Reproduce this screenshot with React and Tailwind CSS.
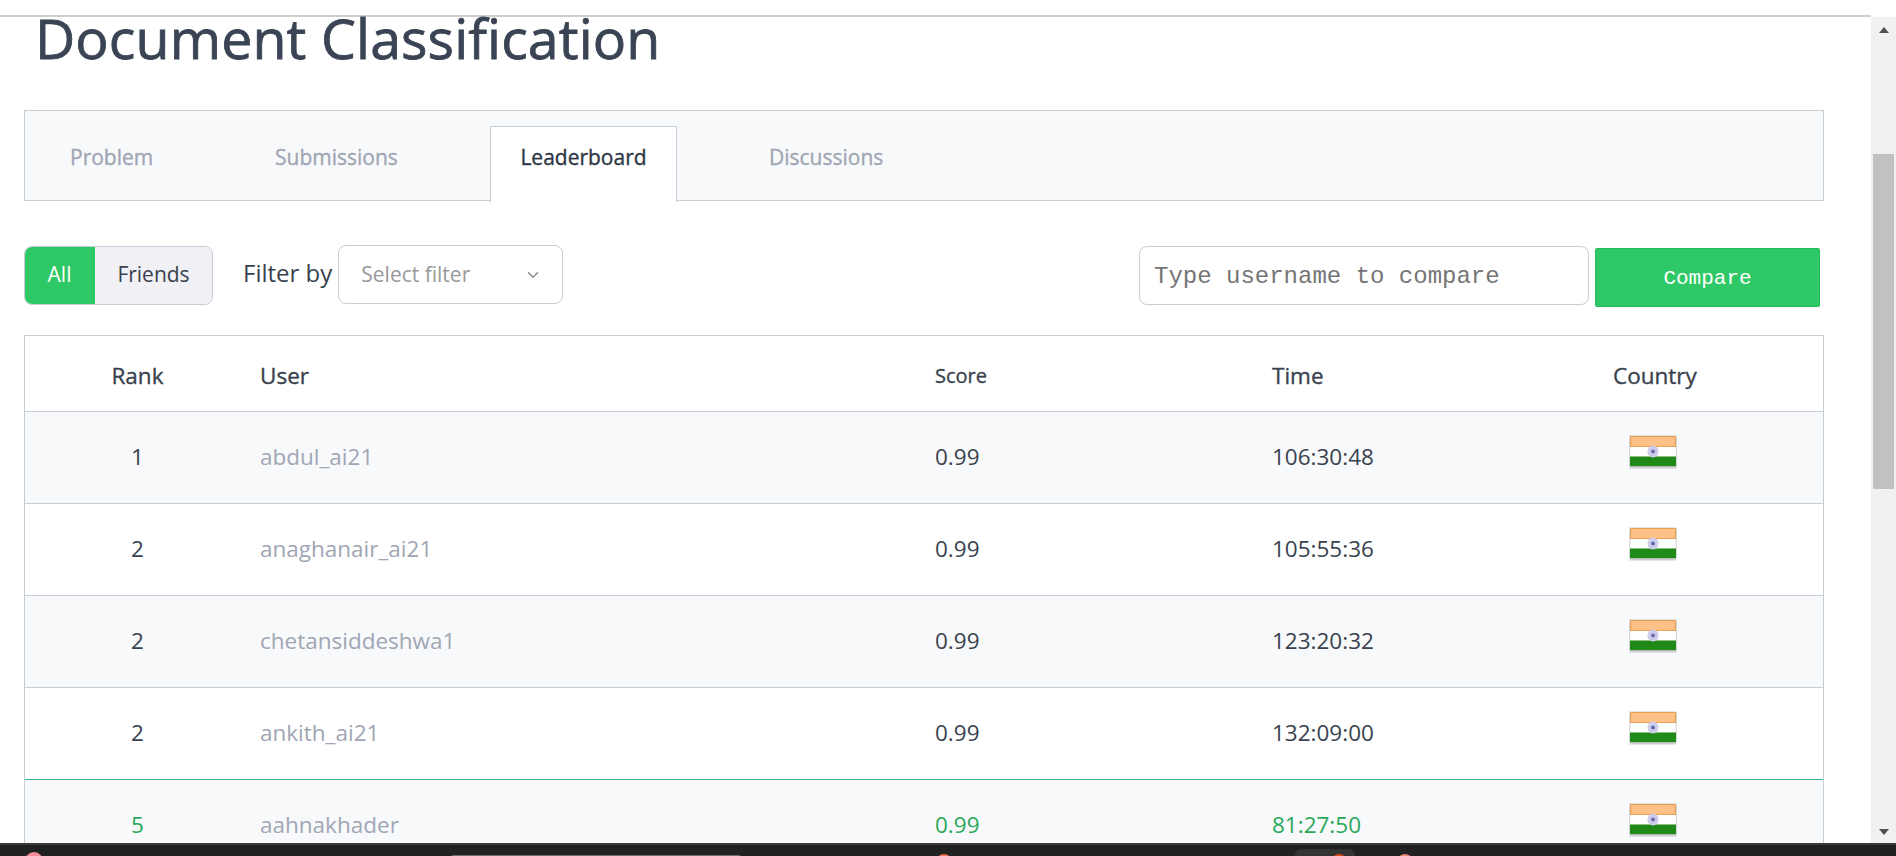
import { ChevronDown } from 'lucide-react';

const rows = [
  { rank: 1, user: 'abdul_ai21', score: '0.99', time: '106:30:48' },
  { rank: 2, user: 'anaghanair_ai21', score: '0.99', time: '105:55:36' },
  { rank: 2, user: 'chetansiddeshwa1', score: '0.99', time: '123:20:32' },
  { rank: 2, user: 'ankith_ai21', score: '0.99', time: '132:09:00' },
  { rank: 5, user: 'aahnakhader', score: '0.99', time: '81:27:50', me: true },
];

function IndiaFlag() {
  return (
    <svg width="48" height="34" viewBox="0 0 48 34">
      <defs>
        <filter id="flagBlur" x="-10%" y="-10%" width="120%" height="130%">
          <feGaussianBlur stdDeviation="0.8" />
        </filter>
      </defs>
      <rect x="0.5" y="1" width="47" height="32" fill="#8f9890" opacity="0.7" filter="url(#flagBlur)" />
      <rect x="1" y="1" width="46" height="30" fill="#f6f6f6" />
      <rect x="1.5" y="1.5" width="45" height="10" fill="#fdc188" stroke="#e8a050" />
      <rect x="2" y="12" width="44" height="9" fill="#ffffff" />
      <rect x="1" y="21.5" width="46" height="9.5" fill="#1f8a17" />
      <ellipse cx="24" cy="16.5" rx="5.5" ry="6" fill="#cdcdea" />
      <circle cx="24" cy="16.5" r="2" fill="#6a6ab4" />
    </svg>
  );
}

export default function App() {
  return (
    <div className="h-[856px] overflow-hidden flex flex-col bg-white font-['Open_Sans',sans-serif]">
      <div className="flex-1 min-h-0 flex pt-[15px] overflow-hidden">
        <div className="flex-1 min-w-0 border-t-2 border-[#cfcfcf]">
          <h1 className="ml-[35px] h-[76px] text-[55.5px] leading-[41px] tracking-[0.1px] text-[#3a4454] font-normal [-webkit-text-stroke:0.8px]">
            Document Classification
          </h1>

          <div className="mx-[24px] mt-[17px] w-[1800px] h-[91px] flex bg-[#f8f9fb] border border-[#c8ccd6] pl-[45px] text-[21px] leading-[28px] [-webkit-text-stroke:0.35px]">
            <div className="w-[205px] pt-[32px] text-[#a0a6b4]">Problem</div>
            <div className="w-[215px] pt-[32px] text-[#a0a6b4]">Submissions</div>
            <div className="w-[187px] h-[76px] mt-[15px] pt-[16px] text-center bg-white border border-b-0 border-[#c8ccd6] text-[#2e3645]">
              Leaderboard
            </div>
            <div className="ml-[92px] pt-[32px] text-[#a0a6b4]">Discussions</div>
          </div>

          <div className="mx-[24px] mt-[44px] w-[1800px] h-[62px] flex items-start">
            <div className="mt-[1px] flex h-[59px] w-[189px] rounded-[8px] overflow-hidden border border-[#c8ccd6]">
              <div className="w-[71px] -my-[1px] -ml-[1px] pb-[2px] flex items-center justify-center bg-[#2ec866] text-white text-[21px]">All</div>
              <div className="flex-1 pb-[2px] flex items-center justify-center bg-[#f0f0f5] text-[#39424e] text-[21px]">Friends</div>
            </div>
            <div className="ml-[30px] mt-[13px] text-[24px] leading-[30px] text-[#39424e]">Filter by</div>
            <div className="ml-[6px] h-[59px] w-[225px] rounded-[8px] border border-[#c8ccd6] flex items-center justify-between pl-[22px] pr-[20px] text-[21px] text-[#999]">
              <span>Select filter</span>
              <ChevronDown className="w-[18px] h-[18px] text-[#8c8c8c]" />
            </div>
            <input
              placeholder="Type username to compare"
              className="ml-auto mt-[1px] h-[59px] w-[450px] rounded-[8px] border border-[#c8ccd6] pl-[14px] pr-[6px] pt-[2px] font-['Liberation_Mono',monospace] text-[24px] placeholder:text-[#757575]"
            />
            <button className="ml-[6px] mt-[3px] mr-[4px] h-[59px] w-[225px] pt-[2px] rounded-[2px] border border-[#28b85c] bg-[#2ec866] text-white font-['Liberation_Mono',monospace] text-[21px]">
              Compare
            </button>
          </div>

          <div className="mx-[24px] mt-[28px] w-[1800px] border border-[#c8ccd6] text-[#39424e]">
            <div className="grid grid-cols-[235px_675px_337px_341px_1fr] h-[75px] pt-[4px] items-center text-[22.5px] leading-[30px] [-webkit-text-stroke:0.35px]">
              <div className="text-center pr-[10px]">Rank</div>
              <div>User</div>
              <div className="text-[20px]">Score</div>
              <div>Time</div>
              <div className="text-center pr-[132px]">Country</div>
            </div>
            {rows.map((row, i) => (
              <div
                key={i}
                className={`grid grid-cols-[235px_675px_337px_341px_1fr] h-[92px] items-center text-[22.5px] pb-[2px] border-t ${i % 2 === 0 ? 'bg-[#f8f9fb]' : 'bg-white'} ${row.me ? 'border-[#39b38f] text-[#2aa85a]' : 'border-[#c8ccd6]'}`}
              >
                <div className="text-center pr-[10px]">{row.rank}</div>
                <div className="text-[#a0a6b4]">{row.user}</div>
                <div>{row.score}</div>
                <div>{row.time}</div>
                <div className="flex justify-center pr-[130px] -mt-[10px]">
                  <IndiaFlag />
                </div>
              </div>
            ))}
          </div>
        </div>

        <div className="w-[25px] mt-[2px] bg-[#f1f1f1] flex flex-col items-center relative">
          <div className="mt-[10px] w-0 h-0 border-x-[5px] border-x-transparent border-b-[6px] border-b-[#505050]" />
          <div className="absolute top-[137px] left-[2px] w-[21px] h-[335px] bg-[#c1c1c1]" />
          <div className="mt-auto mb-[8px] w-0 h-0 border-x-[5px] border-x-transparent border-t-[6px] border-t-[#505050]" />
        </div>
      </div>

      {/* desktop strip along the bottom, mostly cut off */}
      <div className="h-[13px] bg-[#212121] shrink-0 border-t-2 border-[#3a3a3a] relative overflow-hidden">
        <div className="absolute left-[25px] top-[7px] w-[18px] h-[18px] rounded-full bg-[#f58c9b]" />
        <div className="absolute left-[450px] top-[10px] w-[292px] h-[4px] rounded-t-[4px] bg-[#6e6e6e]" />
        <div className="absolute left-[936px] top-[9px] w-[16px] h-[16px] rounded-full bg-[#e8704a]" />
        <div className="absolute left-[1295px] top-[4px] w-[60px] h-[20px] rounded-t-[6px] bg-[#333333]" />
        <div className="absolute left-[1331px] top-[9px] w-[16px] h-[16px] rounded-full bg-[#d4481c]" />
        <div className="absolute left-[1397px] top-[9px] w-[16px] h-[16px] rounded-full bg-[#e88870]" />
      </div>
    </div>
  );
}
